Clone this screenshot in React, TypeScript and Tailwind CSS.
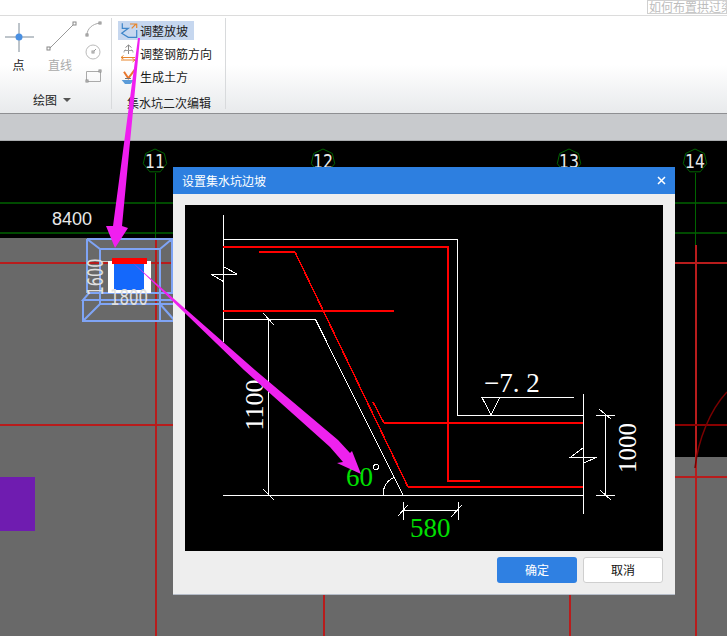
import React from "react";

const Bubble = ({ x, label }: { x: number; label: string }) => {
  const pts = [0, 1, 2, 3, 4, 5, 6]
    .map((i) => {
      const a = -Math.PI / 2 + (i * 2 * Math.PI) / 7;
      return `${x + 12 * Math.cos(a)},${161 + 12 * Math.sin(a)}`;
    })
    .join(" ");
  return (
    <>
      <polygon points={pts} fill="none" stroke="#006400" strokeWidth="1" />
      <text
        x={x}
        y="168"
        textAnchor="middle"
        fontSize="19"
        fill="#e8e8e8"
        fontFamily="DejaVu Sans, sans-serif"
        textLength="20"
        lengthAdjust="spacingAndGlyphs"
      >
        {label}
      </text>
    </>
  );
};

const CadCanvas = () => (
  <svg className="absolute inset-0 block" width="727" height="495" viewBox="0 141 727 495">
    <rect x="0" y="141" width="727" height="495" fill="#000000" />
    <rect x="0" y="238" width="640" height="398" fill="#696969" />
    <rect x="640" y="457" width="87" height="179" fill="#696969" />
    <rect x="0" y="477" width="35" height="54" fill="#6f1cb0" />
    <path d="M0 203H727" stroke="#004a00" strokeWidth="2" />
    <path d="M0 233H727" stroke="#004a00" strokeWidth="2" />
    <path d="M155.500 173V238M695.500 173V245" stroke="#006400" strokeWidth="1" />
    <g fill="#b81c1c">
      <rect x="0" y="262" width="727" height="2" />
      <rect x="0" y="424" width="727" height="2" />
      <rect x="155" y="238" width="2" height="398" />
      <rect x="323" y="595" width="2" height="41" />
      <rect x="569" y="595" width="2" height="41" />
      <rect x="695" y="245" width="2" height="391" />
      <rect x="675" y="476" width="52" height="2" />
    </g>
    <rect x="675" y="424" width="52" height="2" fill="#8a0000" />
    <path d="M695 468C698 440 710 410 727 392" stroke="#7a0000" strokeWidth="1.500" fill="none" />
    <Bubble x={155} label="11" />
    <Bubble x={323} label="12" />
    <Bubble x={569} label="13" />
    <Bubble x={695} label="14" />
    <text x="52" y="225" fontSize="18" fill="#e8e8e8" fontFamily="Liberation Sans, sans-serif">
      8400
    </text>
    <path d="M100 261.500H108" stroke="#c8c8c8" strokeWidth="1" />
    <g stroke="#7fa4f5" strokeWidth="2" fill="none">
      <path d="M87 239H172V293H89L83 300H175M87 239V293M83 300V321H175M100 249H160V321M100 249V304L83 321M87 239L100 249M172 239L160 249M100 304H175M160 304L175 321" />
    </g>
    <rect x="108" y="261" width="43" height="32" fill="#ffffff" />
    <rect x="114" y="262" width="30" height="28" fill="#1468fb" />
    <rect x="112" y="258" width="35" height="6" fill="#ff0000" />
    <text
      transform="translate(103 277) rotate(-90)"
      textAnchor="middle"
      fontSize="21"
      fill="#e0e0e0"
      fontFamily="DejaVu Sans, sans-serif"
      textLength="37"
      lengthAdjust="spacingAndGlyphs"
    >
      1600
    </text>
    <text
      x="129"
      y="305"
      textAnchor="middle"
      fontSize="21"
      fill="#e0e0e0"
      fontFamily="DejaVu Sans, sans-serif"
      textLength="38"
      lengthAdjust="spacingAndGlyphs"
    >
      1800
    </text>
  </svg>
);

const SectionDrawing = () => (
  <svg className="block" width="478" height="346" viewBox="185 205 478 346">
    <rect x="185" y="205" width="478" height="346" fill="#000000" />
    <g stroke="#ffffff" strokeWidth="1" fill="none" shapeRendering="crispEdges">
      <path d="M223.500 215V342" />
      <path d="M223 239.500H457.500V415.500H583" />
      <path d="M223 319.500H315.500L403 495" />
      <path d="M223 495.500H583" />
      <path d="M583.500 394V514" />
      <path d="M268.500 319V495M263 313L274 325M263 489L274 500" />
      <path d="M224 267L237 274H211L224 282" />
      <path d="M583 448L571 457H597L584 463" />
      <path d="M574 397.500H482L491 415L500 397" />
      <path d="M605.500 415V495M596 415.500H615M596 495.500H615M599 409L611 419M600 490L611 500" />
      <path d="M403.500 502V520M458.500 502V520M403 510.500H458M398 516L408 505M451 517L462 505" />
      <path d="M383 495A17 18 0 0 1 394 477.500" />
      <circle cx="376" cy="467" r="2.500" />
    </g>
    <g stroke="#ff0000" fill="none" shapeRendering="crispEdges">
      <path d="M223 247H448V481H480" strokeWidth="2" />
      <path d="M259 252H295" strokeWidth="2" />
      <path d="M295 252L408 487" strokeWidth="1.500" />
      <path d="M408 487H583" strokeWidth="2" />
      <path d="M223 311H394" strokeWidth="2" />
      <path d="M373 402L384 423" strokeWidth="1.500" />
      <path d="M384 423H583" strokeWidth="2" />
    </g>
    <g fontFamily="Liberation Serif, serif">
      <text x="484" y="392" fontSize="27" fill="#ffffff">
        −7. 2
      </text>
      <text transform="translate(636 448) rotate(-90)" textAnchor="middle" fontSize="25" fill="#ffffff">
        1000
      </text>
      <text transform="translate(263 405) rotate(-90)" textAnchor="middle" fontSize="26" fill="#ffffff">
        1100
      </text>
      <text x="346" y="486" fontSize="27" fill="#00e000">
        60
      </text>
      <text x="410" y="537" fontSize="27" fill="#00e000">
        580
      </text>
    </g>
  </svg>
);

const RibbonRow = ({ icon, label, active }: { icon: React.ReactNode; label: string; active?: boolean }) => (
  <div className={`flex items-center h-[19px] w-[76px] gap-[2px] whitespace-nowrap ${active ? "bg-[#c6d7ef]" : ""}`}>
    <svg className="shrink-0" width="20" height="19" viewBox="0 0 20 19" fill="none">
      {icon}
    </svg>
    <span className="text-[12px] leading-[19px] text-[#1a1a1a]">{label}</span>
  </div>
);

const DrawGroup = () => (
  <div className="w-[112px] h-[91px] flex flex-col border-r border-[#d8dadc]">
    <div className="flex h-[71px] pt-[3px] shrink-0">
      <div className="w-[37px] flex flex-col items-center">
        <svg width="36" height="36" viewBox="0 0 36 36" fill="none">
          <path d="M4 16H33M18 2V31" stroke="#7d8a96" strokeWidth="1" />
          <circle cx="18" cy="16" r="3.500" fill="#4a90e2" />
        </svg>
        <span className="text-[12px] leading-[16px] text-[#222]">点</span>
      </div>
      <div className="w-[46px] flex flex-col items-center">
        <svg width="36" height="36" viewBox="0 0 36 36" fill="none">
          <path d="M7 28L32 3" stroke="#999" strokeWidth="1" />
          <rect x="5" y="26" width="3" height="3" fill="#fff" stroke="#888" />
          <rect x="31" y="1" width="3" height="3" fill="#fff" stroke="#888" />
        </svg>
        <span className="text-[12px] leading-[16px] text-[#aaa]">直线</span>
      </div>
      <svg width="20" height="62" viewBox="0 0 20 62" fill="none">
        <path d="M4 14C4 8 9 3 17 2" stroke="#aaa" strokeWidth="1" />
        <rect x="3" y="13" width="2" height="2" fill="#fff" stroke="#888" />
        <rect x="16" y="1" width="2" height="2" fill="#fff" stroke="#888" />
        <circle cx="10" cy="31" r="7" stroke="#bbb" />
        <path d="M10 31L13 28" stroke="#999" />
        <rect x="9" y="30" width="2" height="2" fill="#fff" stroke="#999" />
        <path d="M3.500 50.500H17.500V60.500H3.500Z" stroke="#aaa" />
        <rect x="16" y="49" width="2" height="2" fill="#fff" stroke="#888" />
        <rect x="3" y="59" width="2" height="2" fill="#fff" stroke="#888" />
      </svg>
    </div>
    <div className="flex items-center gap-[6px] h-[22px] pl-[33px] shrink-0 text-[12px] text-[#222]">
      <span>绘图</span>
      <span className="w-0 h-0 border-x-[4px] border-x-transparent border-t-[4px] border-t-[#555]" />
    </div>
  </div>
);

const PitGroup = () => (
  <div className="w-[114px] h-[91px] flex flex-col border-r border-[#d8dadc]">
    <div className="flex flex-col gap-[4px] pl-[6px] pt-[3px] h-[74px] shrink-0">
      <RibbonRow
        active
        label="调整放坡"
        icon={
          <>
            <path d="M4.300 2.300V7.300H10.300L3.700 12.300L10.300 16.300H18.700V9" stroke="#3f86c9" strokeWidth="1.200" />
            <path d="M12 3H18.700V7M13.700 7.300L18 3" stroke="#e8862c" strokeWidth="1.200" />
          </>
        }
      />
      <RibbonRow
        label="调整钢筋方向"
        icon={
          <>
            <path d="M10.500 1V10M7.500 3.500L10.500 1L13.500 3.500" stroke="#8a8a8a" strokeWidth="1" />
            <path d="M6 6.500H15" stroke="#a0a0a0" strokeWidth="1" />
            <path d="M6 8.500C6 6.500 7 6 8 6M15 8.500C15 6.500 14 6 13 6" stroke="#a0a0a0" strokeWidth="1" />
            <path d="M3 13.500H17M3 16H17M5.500 11.500L3 13.500L5.500 15M14.500 14.500L17 16L14.500 18" stroke="#e8862c" strokeWidth="1" />
          </>
        }
      />
      <RibbonRow
        label="生成土方"
        icon={
          <>
            <path d="M6 4.700L10.300 11.300L17 2.300" stroke="#e8762c" strokeWidth="2" />
            <path d="M3.700 13H16L12.500 17H7Z" fill="#5a9bd8" />
            <path d="M7 11.500H13" stroke="#777" strokeWidth="1" />
          </>
        }
      />
    </div>
    <div className="h-[22px] shrink-0 pl-[1px] flex items-center justify-center text-[12px] text-[#222]">集水坑二次编辑</div>
  </div>
);

const Dialog = () => (
  <div className="absolute left-[173px] top-[26px] w-[502px] flex flex-col bg-[#eeeeee] border-b border-[#b5bcc8]">
    <div className="h-[27px] bg-[#2d7fe0] flex items-center justify-between pl-[9px] pr-[9px] text-white">
      <span className="text-[12px]">设置集水坑边坡</span>
      <svg width="9" height="9" viewBox="0 0 9 9" fill="none">
        <path d="M1 1L8 8M8 1L1 8" stroke="#ffffff" strokeWidth="1.500" />
      </svg>
    </div>
    <div className="pt-[11px] px-[12px] pb-[11px] flex flex-col gap-[6px]">
      <SectionDrawing />
      <div className="flex justify-end gap-[6px]">
        <button className="w-[80px] h-[26px] rounded-[3px] bg-[#2f80e2] text-white text-[12px]">确定</button>
        <button className="w-[80px] h-[26px] rounded-[3px] bg-white border border-[#cfcfcf] text-[#111] text-[12px]">
          取消
        </button>
      </div>
    </div>
  </div>
);

export default function App() {
  return (
    <div className="relative w-[727px] h-[636px] overflow-hidden flex flex-col bg-white font-['Noto_Sans_CJK_SC','Noto_Sans',sans-serif]">
      <div className="h-[16px] shrink-0 flex justify-end border-b border-[#dcdcdc]">
        <div className="w-[80px] h-[14px] border border-[#d0d0d0] text-[12px] leading-[12px] text-[#bdbdbd] whitespace-nowrap overflow-hidden pl-[1px]">
          如何布置拱过梁
        </div>
      </div>
      <div className="h-[98px] shrink-0 flex pt-[2px] bg-gradient-to-b from-white from-[50%] to-[#e8eaec] border-b border-[#8e8f92]">
        <DrawGroup />
        <PitGroup />
      </div>
      <div className="h-[27px] shrink-0 bg-[#c8cacd] border-b border-[#a9abae]" />
      <div className="relative flex-1">
        <CadCanvas />
        <Dialog />
      </div>
      <svg className="absolute inset-0 pointer-events-none" width="727" height="636" viewBox="0 0 727 636">
        <polygon points="138,38 140,38 122,226 128,228 115,248 106,226 113,226" fill="#f01ef0" />
        <polygon
          points="132,262 255,370 338,440 350,453 352,451 361,474 337,463 343,462 330,447 244,370"
          fill="#ee22ee"
        />
      </svg>
    </div>
  );
}
